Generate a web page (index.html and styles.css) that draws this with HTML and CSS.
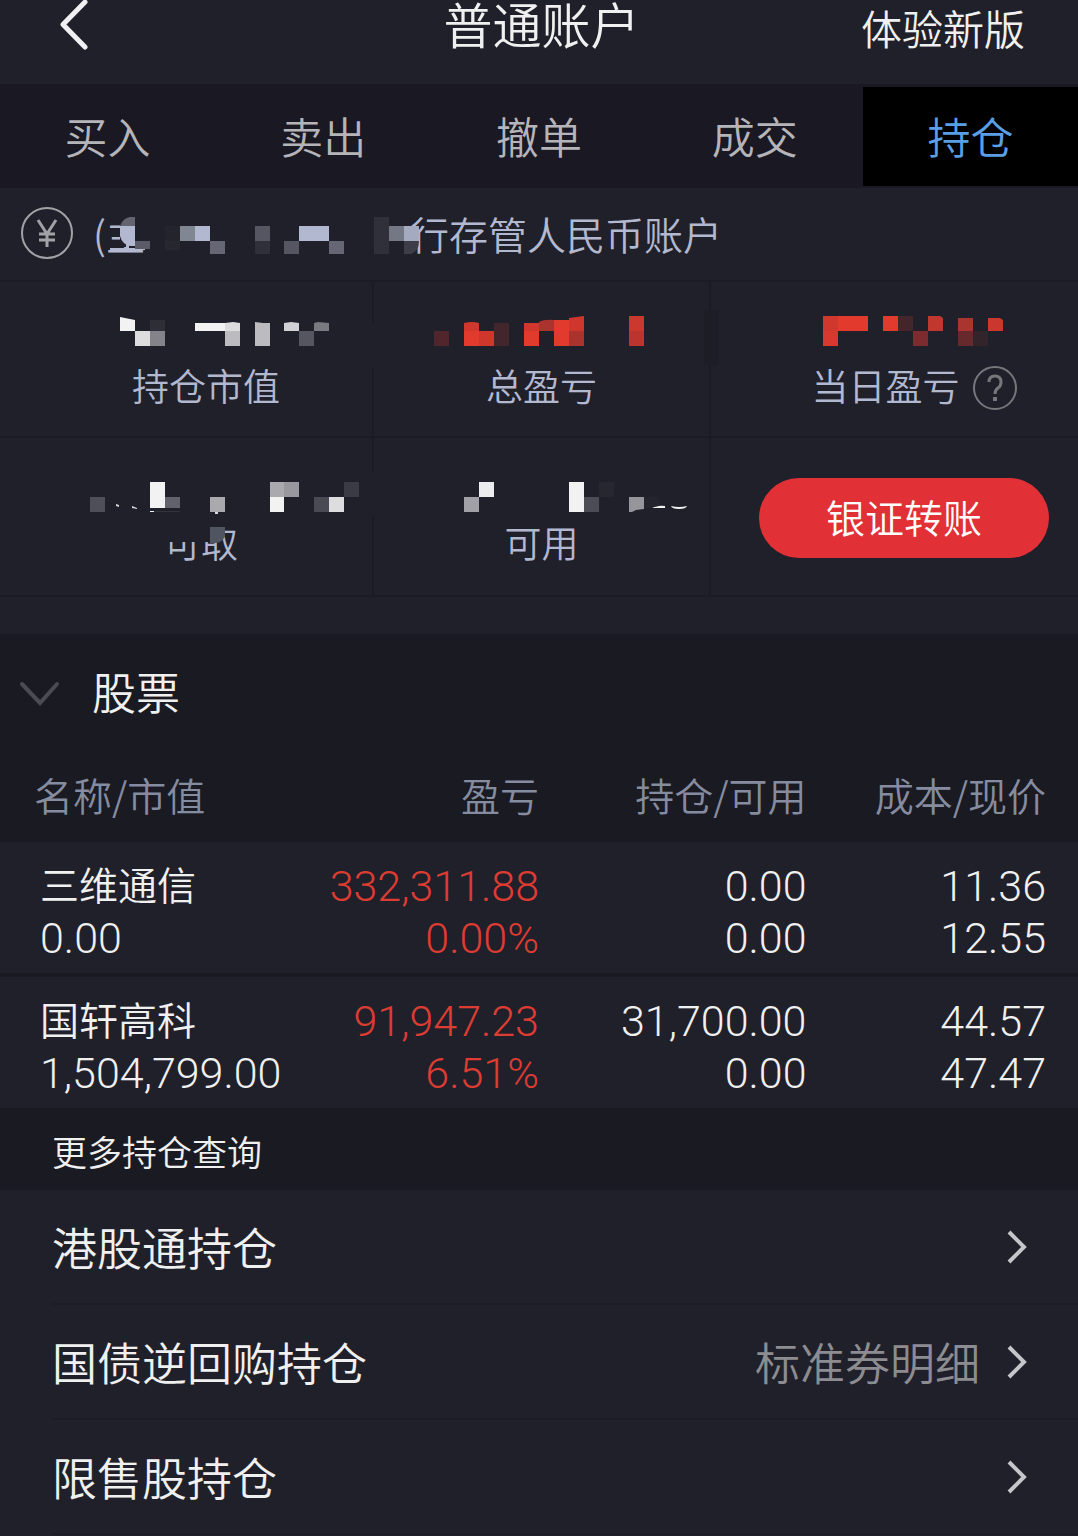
FILE: index.html
```html
<!DOCTYPE html>
<html lang="zh-CN">
<head>
<meta charset="utf-8">
<meta name="viewport" content="width=device-width, initial-scale=1">
<title>普通账户</title>
<link rel="stylesheet" href="styles.css">
</head>
<body>
<header class="topbar">
  <button class="back" type="button" aria-label="返回">
    <svg width="32" height="50" viewBox="0 0 32 50"><path d="M27 2 5 24.500 27 47" fill="none" stroke="#f0f0f2" stroke-width="5" stroke-linecap="round" stroke-linejoin="round"/></svg>
  </button>
  <h1 class="title">普通账户</h1>
  <button class="switch" type="button">体验新版</button>
</header>

<nav class="tabs">
  <a class="tab" href="#buy">买入</a>
  <a class="tab" href="#sell">卖出</a>
  <a class="tab" href="#cancel">撤单</a>
  <a class="tab" href="#deals">成交</a>
  <a class="tab tab-active" href="#positions" aria-current="page">持仓</a>
</nav>

<main>
  <div class="account">
    <svg class="yen" width="54" height="54" viewBox="0 0 54 54" fill="none" stroke="#a2a2a6" stroke-width="2"><circle cx="27" cy="27" r="25"/><path stroke-width="3" d="M18 14l9 14 9-14M27 28v13M19 28h16M19 34h16"/></svg>
    <span class="account-text">(主</span>
    <svg class="account-mask" width="300" height="50" viewBox="120 208 300 50">
      <path fill="#20202a" d="M120 208H420V217H413L407 229H400V258H148V252H145V247H120Z"/>
      <path fill="#b2b8cf" d="M110 248h35v2h-35z"/>
      <path fill="#626470" d="M120 226q3-8 10-9h5v9z"/>
      <path fill="#b2b8cf" d="M120 226h15v20h-5q-8-2-10-10zM195 226h15v15h-15zM299 226h30v15h-30zM126 244h3v4h-3z"/>
      <path fill="#5a5b67" d="M135 241h15v8h-15z"/>
      <path fill="#24242c" d="M165 226h15v15h-15z"/><path fill="#272730" d="M165 241h15v9h-15z"/>
      <path fill="#818693" d="M180 226h15v15h-15z"/>
      <path fill="#666774" d="M210 241h15v13h-15zM329 241h15v13h-15z"/>
      <path fill="#555662" d="M255 226h15v15h-15zM284 241h15v13h-15z"/>
      <path fill="#30303a" d="M255 241h15v13h-15zM374 217h15v37h-15z"/>
      <path fill="#747885" d="M389 226h15v15h-15z"/><path fill="#a4aabf" d="M404 226h15v15h-15z"/>
      <path fill="#3d3d49" d="M404 241h15q0 10-8 13h-7z"/>
    </svg>
    <span class="account-text">行存管人民币账户</span>
  </div>

  <section class="summary">
    <div class="cell">
      <svg class="value" viewBox="0 316 372 30">
        <path fill="#20202a" d="M368 323h7v45h-7z"/>
        <path fill="#f2f2f3" d="M120 317l15 3v11h-15zM195 323h30v8h-30z"/>
        <path fill="#2e2e37" d="M150 320h15v11h-15z"/>
        <path fill="#dddde0" d="M135 331h15v15h-15zM225 323l8-1 7 1v8h-15z"/>
        <path fill="#838389" d="M150 331h15v15h-15z"/>
        <path fill="#bcbcc0" d="M225 331h15v15h-15zM255 322l8 1h7v23h-15z"/>
        <path fill="#d2d2d6" d="M284 323l7-1 8 1v8h-15z"/>
        <path fill="#797980" d="M314 323l4-1 11 1v8h-15z"/><path fill="#555660" d="M299 331h15v15h-15z"/>
      </svg>
      <div class="label label-shift">持仓市值</div>
    </div>
    <div class="cell">
      <svg class="value" viewBox="374 316 335 30">
        <path fill="#1d1d26" d="M704 310h15v55h-15z"/>
        <path fill="#50262c" d="M434 331h15v15h-15z"/><path fill="#43262b" d="M494 323h15v23h-15z"/>
        <path fill="#d0382d" d="M464 323q8-2 15 0v8h-15zM524 323h15v8h-15z"/>
        <path fill="#e23b2e" d="M464 331h15v15h-15zM524 331h15v15h-15zM554 320h15v26h-15z"/>
        <path fill="#cf372d" d="M479 331h15v15h-15zM569 318l15-2v15h-15z"/>
        <path fill="#aa332e" d="M539 322q5-3 15-2v11h-15zM569 331h15v15h-15z"/>
        <path fill="#cc382e" d="M629 316h15v15h-15z"/><path fill="#bb352e" d="M629 331h15v15h-15z"/>
      </svg>
      <div class="label">总盈亏</div>
    </div>
    <div class="cell">
      <svg class="value" viewBox="711 316 367 30">
        <path fill="#d0382e" d="M823 316h15v15h-15z"/>
        <path fill="#e23b2e" d="M838 316h30v15h-30zM883 316h15v15h-15z"/>
        <path fill="#d8392e" d="M823 331h15v15h-15z"/>
        <path fill="#43262b" d="M898 316h15v15h-15z"/><path fill="#7c2c2e" d="M913 331h15v15h-15z"/>
        <path fill="#bf372f" d="M928 316h12l3 2v13h-15z"/><path fill="#aa342f" d="M958 318h15v13h-15z"/>
        <path fill="#672a2c" d="M958 331h15v15h-15z"/><path fill="#33232b" d="M973 331h15v15h-15z"/>
        <path fill="#c9372f" d="M988 318h12l3 2v11h-15z"/>
      </svg>
      <div class="label label-shift label-help">当日盈亏
        <button class="help" type="button" aria-label="当日盈亏说明"><svg width="46" height="46" viewBox="0 0 46 46" fill="none" stroke="#77777b"><circle cx="23" cy="23" r="21" stroke-width="2"/><path stroke-width="3" d="M17 17q0-6 6-6t6 6q0 4-3 6-3 2-3 6"/><path stroke-width="4" d="M23 32v4"/></svg></button>
      </div>
    </div>
    <div class="cell">
      <svg class="value" viewBox="0 482 372 30">
        <path fill="#20202a" d="M368 472h7v43h-7z"/>
        <path fill="#4f4f59" d="M90 497h15v15h-15z"/>
        <path fill="#d8d8dc" d="M116 504l3 1v2l-3-1zM132 506l5 2v1l-5-1zM215 512h3v2h-3z"/>
        <path fill="#f2f2f3" d="M150 482h15v26h-15zM150 511h4v1h-4zM270 497h14v15h-14z"/>
        <path fill="#62626c" d="M165 497h15v11h-15z"/><path fill="#33333c" d="M154 511h26v1h-26z"/>
        <path fill="#a9a9ae" d="M210 497h15v15h-15zM270 482h14v15h-14z"/><path fill="#98989e" d="M284 482h15v15h-15z"/>
        <path fill="#4a4a54" d="M314 497h15v15h-15z"/><path fill="#dddde0" d="M329 497h15v15h-15z"/><path fill="#3b3b45" d="M344 482h15v15h-15z"/>
      </svg>
      <div class="label label-shift label-masked">可取
        <svg class="label-mask" viewBox="160 524 80 40"><path fill="#20202a" d="M160 522h50v20h-50z"/><path fill="#505562" d="M210 527h15v9q-3 7-9 7h-6z"/></svg>
      </div>
    </div>
    <div class="cell">
      <svg class="value" viewBox="374 482 335 30">
        <path fill="#ececef" d="M479 482h15v15h-15z"/><path fill="#a0a0a6" d="M464 497h15v15h-15z"/>
        <path fill="#f2f2f3" d="M569 482h15v30h-15zM652 508q5-3 13-2v2zM671 506q8 2 16 0-1 3-8 3t-8-3z"/>
        <path fill="#4c4c56" d="M584 497h15v15h-15z"/><path fill="#27272f" d="M599 482h15v15h-15z"/>
        <path fill="#95959b" d="M629 497h15v12l-8 1-4 2h-3z"/><path fill="#24242d" d="M644 497h15v9l-15 3z"/>
      </svg>
      <div class="label">可用</div>
    </div>
    <div class="cell cell-action">
      <button class="transfer" type="button">银证转账</button>
    </div>
  </section>

  <section class="stocks">
    <h2 class="stocks-title">
      <svg width="40" height="24" viewBox="0 0 40 24"><path d="M2 2l18 19L37 2" fill="none" stroke="#4b4b54" stroke-width="4" stroke-linecap="round"/></svg>
      股票
    </h2>
    <table class="holdings">
      <thead>
        <tr><th scope="col">名称/市值</th><th scope="col">盈亏</th><th scope="col">持仓/可用</th><th scope="col">成本/现价</th></tr>
      </thead>
      <tbody>
        <tr>
          <td><span class="name">三维通信</span><span>0.00</span></td>
          <td class="gain"><span>332,311.88</span><span>0.00%</span></td>
          <td><span>0.00</span><span>0.00</span></td>
          <td><span>11.36</span><span>12.55</span></td>
        </tr>
        <tr>
          <td><span class="name">国轩高科</span><span>1,504,799.00</span></td>
          <td class="gain"><span>91,947.23</span><span>6.51%</span></td>
          <td><span>31,700.00</span><span>0.00</span></td>
          <td><span>44.57</span><span>47.47</span></td>
        </tr>
      </tbody>
    </table>
  </section>

  <section>
    <h2 class="more-title">更多持仓查询</h2>
    <ul class="more">
      <li><a class="row" href="#hk">港股通持仓<svg class="chevron" viewBox="0 0 22 34"><path d="M3 2l15 15L3 32"/></svg></a></li>
      <li><a class="row" href="#repo">国债逆回购持仓<span class="note">标准券明细</span><svg class="chevron" viewBox="0 0 22 34"><path d="M3 2l15 15L3 32"/></svg></a></li>
      <li><a class="row" href="#restricted">限售股持仓<svg class="chevron" viewBox="0 0 22 34"><path d="M3 2l15 15L3 32"/></svg></a></li>
    </ul>
  </section>
</main>
</body>
</html>
```
FILE: styles.css
```css
* { box-sizing: border-box; }

body {
  margin: 0;
  background: #20202a;
  color: #f0f0f0;
  font-family: "Noto Sans CJK SC", sans-serif;
  font-weight: 350;
}

h1, h2, ul { margin: 0; padding: 0; font-weight: inherit; }
ul { list-style: none; }
a { color: inherit; text-decoration: none; }
button { border: 0; padding: 0; background: none; color: inherit; font: inherit; }
svg { display: block; flex: none; overflow: visible; }

.topbar {
  display: grid;
  grid-template-columns: 1fr auto 1fr;
  align-items: start;
  padding: 0 53px 30px 58px;
}
.back { justify-self: start; }
.title { font-size: 49px; line-height: 45px; }
.switch { justify-self: end; font-size: 41px; line-height: 54px; }

.tabs {
  display: grid;
  grid-template-columns: repeat(5, 1fr);
  gap: 1px;
  padding: 3px 0 2px;
  background: #1a1823;
}
.tab {
  padding-bottom: 2px;
  color: #b5b4b8;
  font-size: 43px;
  line-height: 97px;
  text-align: center;
}
.tab-active { background: #000; color: #5a9fe6; }

.account {
  display: flex;
  align-items: center;
  height: 94px;
  padding: 0 20px 2px;
  border-bottom: 2px solid #1b1b24;
  color: #b2b8cf;
}
.yen { margin-right: 19px; }
.account-text { font-size: 39px; line-height: 50px; }
.account-mask { position: relative; z-index: 1; margin: 0 -10px 0 -25px; }

.summary {
  display: grid;
  grid-template-columns: 374fr 337fr 367fr;
  padding-bottom: 37px;
}
.cell {
  min-height: 156px;
  padding-top: 34px;
  border-right: 2px solid #1b1b24;
  border-bottom: 2px solid #1b1b24;
}
.cell:nth-child(3n) { border-right: 0; }
.cell:nth-child(n + 4) { min-height: 159px; padding-top: 44px; }
.value { width: 100%; height: 30px; }
.label {
  display: flex;
  align-items: flex-start;
  justify-content: center;
  height: 46px;
  margin-top: 19px;
  color: #b2b8cf;
  font-size: 37px;
  line-height: 41px;
}
.cell:nth-child(n + 4) .label { margin-top: 10px; }
.label-shift { padding-left: 40px; }
.label-help { gap: 12px; }
.label-masked { position: relative; padding-left: 30px; }
.label-mask { position: absolute; top: 2px; left: 160px; width: 80px; height: 40px; }
.summary .cell-action { padding: 40px 29px 0 48px; }
.transfer {
  width: 100%;
  padding-bottom: 4px;
  border-radius: 40px;
  background: #e13036;
  color: #fff;
  font-size: 39px;
  line-height: 76px;
}

.stocks { background: #1a1a22; }
.stocks-title {
  display: flex;
  align-items: center;
  gap: 32px;
  padding: 25px 20px 29px;
  font-size: 44px;
  line-height: 64px;
}
.stocks-title svg { margin-top: 6px; }
.holdings {
  width: 100%;
  border-collapse: collapse;
  table-layout: fixed;
}
.holdings th {
  padding: 17px 0 23px;
  color: #868ca0;
  font-size: 39px;
  font-weight: inherit;
  line-height: 50px;
  text-align: right;
}
.holdings th:first-child { width: 28%; padding-left: 34px; text-align: left; }
.holdings th:nth-child(2) { width: 22%; }
.holdings td {
  padding: 18px 0 9px;
  background: #20202a;
  font-family: Roboto, "Liberation Sans", sans-serif;
  font-size: 43px;
  font-weight: 300;
  line-height: 52px;
  text-align: right;
}
.holdings td span { display: block; height: 52px; }
.holdings td:first-child { padding-left: 40px; text-align: left; }
.holdings tr > :nth-child(3) { padding-right: 2px; }
.holdings tr > :nth-child(4) { padding-right: 32px; }
.holdings tr + tr td { border-top: 4px solid #1a1a22; }
.holdings .name {
  font-family: "Noto Sans CJK SC", sans-serif;
  font-size: 39px;
  font-weight: 350;
  line-height: 46px;
}
.holdings .gain { color: #dc3c32; }

.more-title {
  padding: 18px 52px 14px;
  background: #1a1a22;
  font-size: 35px;
  line-height: 50px;
}
.more li { padding-left: 52px; }
.row {
  display: flex;
  align-items: center;
  gap: 26px;
  padding: 0 50px 0 0;
  border-bottom: 2px solid #1c1c25;
  font-size: 45px;
  line-height: 113px;
}
.note { margin-left: auto; color: #8c8c91; }
.chevron {
  width: 22px;
  height: 34px;
  fill: none;
  stroke: #c6c6ca;
  stroke-width: 4;
}
.row > .chevron:only-child { margin-left: auto; }
```
